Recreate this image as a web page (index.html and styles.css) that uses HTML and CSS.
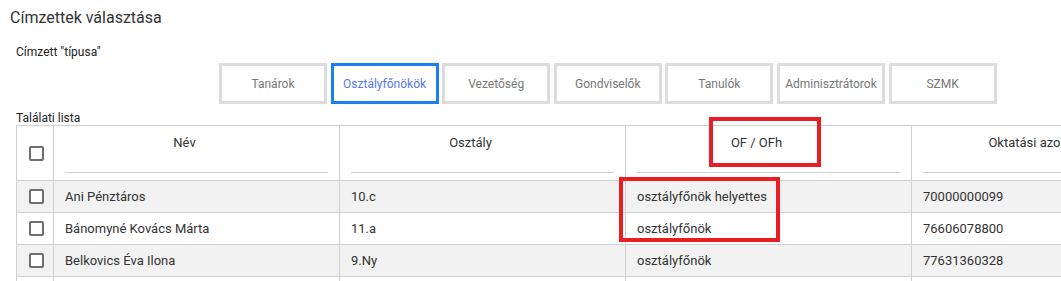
FILE: index.html
```html
<!DOCTYPE html>
<html lang="hu">
<head>
<meta charset="utf-8">
<title>Címzettek választása</title>
<link rel="stylesheet" href="styles.css">
</head>
<body>
<div class="page">
  <h1 class="title">Címzettek választása</h1>
  <div class="label">Címzett "típusa"</div>
  <div class="types">
    <button class="type">Tanárok</button>
    <button class="type active">Osztályfőnökök</button>
    <button class="type">Vezetőség</button>
    <button class="type">Gondviselők</button>
    <button class="type">Tanulók</button>
    <button class="type">Adminisztrátorok</button>
    <button class="type">SZMK</button>
  </div>
  <div class="list-label">Találati lista</div>
  <div class="grid">
    <div class="cell head check"><span class="box"></span></div>
    <div class="cell head"><span class="htext">Név</span><span class="filter"></span></div>
    <div class="cell head"><span class="htext">Osztály</span><span class="filter"></span></div>
    <div class="cell head"><span class="htext">OF / OFh</span><span class="filter"></span></div>
    <div class="cell head"><span class="htext">Oktatási azonosító</span><span class="filter"></span></div>

    <div class="cell alt check"><span class="box"></span></div>
    <div class="cell alt">Ani Pénztáros</div>
    <div class="cell alt">10.c</div>
    <div class="cell alt">osztályfőnök helyettes</div>
    <div class="cell alt">70000000099</div>

    <div class="cell check"><span class="box"></span></div>
    <div class="cell">Bánomyné Kovács Márta</div>
    <div class="cell">11.a</div>
    <div class="cell">osztályfőnök</div>
    <div class="cell">76606078800</div>

    <div class="cell alt check"><span class="box"></span></div>
    <div class="cell alt">Belkovics Éva Ilona</div>
    <div class="cell alt">9.Ny</div>
    <div class="cell alt">osztályfőnök</div>
    <div class="cell alt">77631360328</div>

    <div class="cell check"></div>
    <div class="cell"></div>
    <div class="cell"></div>
    <div class="cell"></div>
    <div class="cell"></div>
  </div>
  <div class="mark mark-head"></div>
  <div class="mark mark-rows"></div>
</div>
</body>
</html>
```
FILE: styles.css
```css
* { box-sizing: border-box; }
html, body { margin: 0; padding: 0; background: #fff; }
body {
  font-family: Roboto, "Noto Sans", "Liberation Sans", sans-serif;
  color: #333;
  overflow: hidden;
}
.page {
  position: relative;
  width: 1061px;
  height: 281px;
  overflow: hidden;
}
.title {
  margin: 8px 0 0 10px;
  font-size: 16px;
  line-height: 20px;
  font-weight: 400;
  color: #333;
}
.label {
  margin: 16px 0 0 16px;
  font-size: 12px;
  line-height: 16px;
  color: #222;
}
.types {
  display: flex;
  gap: 3.6px;
  margin: 3px 0 0 219px;
}
.type {
  width: 108px;
  height: 41px;
  border: 3px solid #dcdcdc;
  background: #fff;
  font-family: inherit;
  font-size: 12px;
  color: #777;
  padding: 0;
  flex: none;
}
.type.active {
  border-color: #1a7ff0;
  color: #5579ef;
}
.list-label {
  margin: 7px 0 0 16px;
  font-size: 12px;
  line-height: 14px;
  color: #222;
}
.grid {
  display: grid;
  grid-template-columns: 37px 286px 286px 286px 286px;
  grid-template-rows: 55px;
  grid-auto-rows: 32px;
  margin-left: 16px;
  width: max-content;
  border-top: 1px solid #cfcfcf;
}
.cell {
  border-left: 1px solid #cfcfcf;
  border-bottom: 1px solid #cfcfcf;
  font-size: 13px;
  line-height: 16px;
  color: #333;
  padding: 0 11px;
  display: flex;
  align-items: center;
  white-space: nowrap;
  overflow: hidden;
}
.cell.alt { background: #f2f2f2; }
.cell.head {
  flex-direction: column;
  align-items: stretch;
  padding: 9px 11px 0 11px;
}
.cell.head.check {
  padding: 0;
}
.cell.check {
  justify-content: center;
  padding: 0;
  flex-direction: row;
  align-items: center;
}
.htext {
  display: block;
  text-align: center;
  padding-right: 24px;
  height: 16px;
}
.filter {
  display: block;
  margin-top: 21px;
  border-bottom: 1px solid #cfcfcf;
}
.box {
  width: 15px;
  height: 15px;
  border: 2px solid #6e6e6e;
  border-radius: 2px;
  background: #fff;
  margin-left: 2px;
}
.mark {
  position: absolute;
  border: 4.5px solid #ec1c24;
}
.mark-head {
  left: 709px;
  top: 117px;
  width: 112px;
  height: 50px;
}
.mark-rows {
  left: 619px;
  top: 177px;
  width: 161px;
  height: 65px;
}
```
